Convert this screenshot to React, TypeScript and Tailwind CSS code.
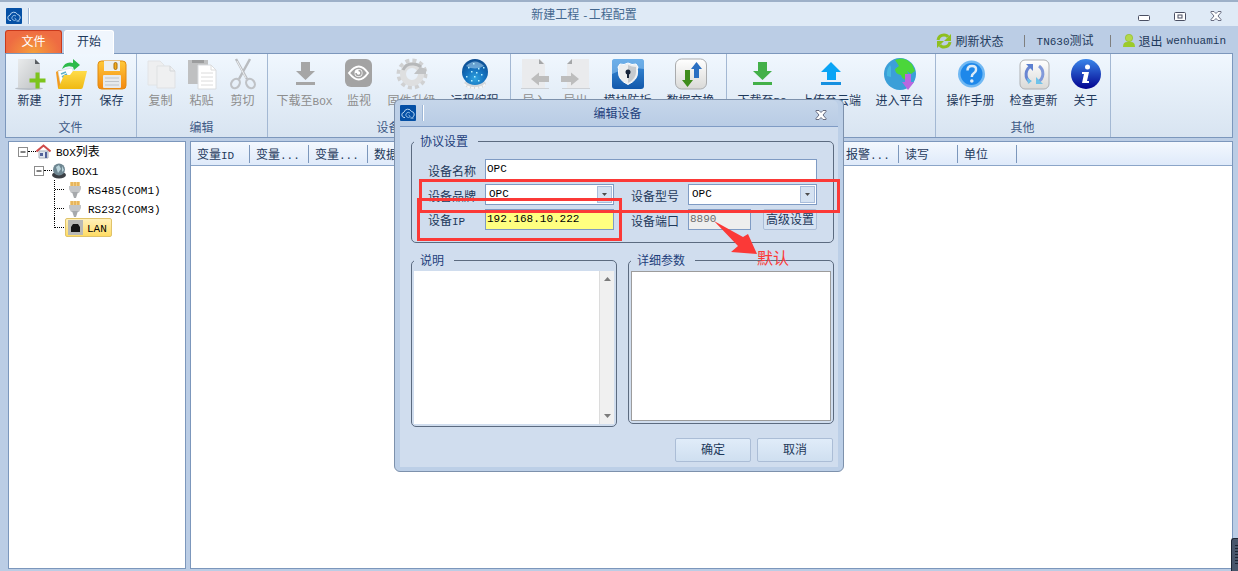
import type { ReactNode } from 'react';

interface ToolItem {
  label: string;
  icon: ReactNode;
  width: string;
  disabled?: boolean;
}

interface ToolGroup {
  title: string;
  items: ToolItem[];
}

/* Latin runs are set in a narrow mono face next to the CJK glyphs */
function T({ children }: { children: string }) {
  const parts = children.split(/([\x21-\x7e]+)/).filter(Boolean);
  return (
    <>
      {parts.map((p, i) =>
        /^[\x21-\x7e]/.test(p) ? (
          <span key={i} className="font-['Liberation_Mono',monospace] text-[11px]">
            {p}
          </span>
        ) : (
          p
        ),
      )}
    </>
  );
}

function Svg({ children }: { children: ReactNode }) {
  return (
    <svg width="32" height="32" viewBox="0 0 32 32" fill="none" aria-hidden="true">
      {children}
    </svg>
  );
}

const NewIcon = (
  <Svg>
    <ellipse cx="15" cy="30.500" rx="14" ry="1.500" fill="#b9bfc6" />
    <path d="M4 1h17l5 5v24H4z" fill="url(#page)" />
    <path d="M21 1l5 5h-5z" fill="#5a5e62" />
    <path d="M21.500 14.500h4v6h6v4h-6v6h-4v-6h-6v-4h6z" fill="#7cc41c" />
  </Svg>
);

const OpenIcon = (
  <Svg>
    <path d="M1 14l3-2 8 1v17H3z" fill="#f39a1e" />
    <path d="M3 13l14-3 5 14-16 5z" fill="#fff" stroke="#c9dbe4" strokeWidth=".6" />
    <path d="M6 16l5-2m-4 5l5-3" stroke="#5fb1c9" strokeWidth="1.500" />
    <path d="M9 17h6l3-4h14l-4 16q-.5 2-2 2H3z" fill="url(#folder)" />
    <path d="M7 11Q10 3 18 5V1l7 6-6 5-1-3Q12 7 7 11z" fill="#2dbb4a" />
  </Svg>
);

const SaveIcon = (
  <Svg>
    <rect x="2" y="3" width="28" height="28" rx="3.500" fill="url(#floppy)" stroke="#e08a10" />
    <path d="M8 3h16v10H8z" fill="#eceff2" />
    <rect x="18" y="4.500" width="3" height="7" rx="1.500" fill="#f3a91b" stroke="#a86f10" />
    <rect x="7" y="17" width="18" height="13" rx="1" fill="#e6e9ec" />
    <path d="M9 20h14M9 23.500h14M9 27h14" stroke="#bfc4ca" />
  </Svg>
);

const CopyIcon = (
  <Svg>
    <path d="M3 3h12l4 4v20H3z" fill="#eeeff0" stroke="#e2e4e6" />
    <path d="M12 8h13l5 5v17H12z" fill="#eff0f1" stroke="#dfe1e3" />
    <path d="M25 8v5h5" stroke="#d3d6d9" />
  </Svg>
);

const PasteIcon = (
  <Svg>
    <rect x="2" y="2" width="20" height="24" fill="#bfc0c1" />
    <path d="M6 2h12v3H6z" fill="#9c9d9e" />
    <path d="M12 7h13l5 5v19H12z" fill="#fff" stroke="#d9dcdf" />
    <path d="M25 7v5h5M15 15h12M15 19h12M15 23h12M15 27h12" stroke="#dcdcdc" />
  </Svg>
);

const CutIcon = (
  <Svg>
    <path d="M9 1l11 20M23 1L12 21" stroke="#b9bcc0" strokeWidth="2.500" />
    <path d="M10 3l9 17" stroke="#eceef0" />
    <ellipse cx="8.500" cy="25.500" rx="4" ry="5" transform="rotate(35 8.500 25.500)" stroke="#bfc2c6" strokeWidth="2.200" />
    <ellipse cx="23.500" cy="25.500" rx="4" ry="5" transform="rotate(-35 23.500 25.500)" stroke="#bfc2c6" strokeWidth="2.200" />
  </Svg>
);

function DownIcon({ color, bar }: { color: string; bar: string }) {
  return (
    <Svg>
      <path d="M12 4h9v9h5L16.500 22 7 13h5z" fill={color} />
      <path d="M7 24h19v3H7z" fill={bar} />
    </Svg>
  );
}

const UpIcon = (
  <Svg>
    <path d="M16 4l10 10h-5v8h-9v-8H6z" fill="#0aa4f5" />
    <path d="M6 24h20v3H6z" fill="#1690e0" />
  </Svg>
);

const EyeIcon = (
  <Svg>
    <rect x="2" y="1" width="27" height="28" rx="6" fill="#a3a3a3" />
    <path d="M6 15q10-13 19 0-9 13-19 0z" stroke="#fff" strokeWidth="2" />
    <circle cx="15.500" cy="15" r="4" fill="#fff" />
    <path d="M15.500 12.500a2.500 2.500 0 1 1-2.500 2.500" stroke="#a3a3a3" strokeWidth="1.500" />
  </Svg>
);

const GearIcon = (
  <Svg>
    <circle cx="16" cy="16" r="13.500" stroke="#d0d1d2" strokeWidth="4" strokeDasharray="4 3.070" />
    <circle cx="16" cy="16" r="9" fill="#e8f0f9" stroke="#dedfe0" strokeWidth="6" />
    <path d="M25 9a11 11 0 0 0-9-3 10 10 0 0 0-9 6" stroke="#b6b8ba" strokeWidth="3" />
    <path d="M18 16h12v-5l-6-2z" fill="#c0c2c4" />
  </Svg>
);

const GlobeIcon = (
  <Svg>
    <ellipse cx="16" cy="26" rx="11" ry="5" fill="#d3d7db" />
    <path d="M5 26q4 4 11 4t11-4" stroke="#f5f6f7" strokeWidth="2" strokeDasharray="3 1" />
    <circle cx="16" cy="14" r="13" fill="url(#globe)" />
    <path d="M7 8q9-9 18 0-9 5-18 0z" fill="#d4efff" opacity=".45" />
    <path d="M9 9h1.500v1.500H9zM14 5h1.500v1.500H14zM19 10h1.500v1.500H19zM7 18h1.500v1.500H7zM12 13h1.500v1.500H12zM15 18h1.500v1.500H15zM22 16h1.500v1.500H22zM12 22h1.500v1.500H12zM19 22h1.500v1.500H19zM24 9h1.500v1.500H24zM17 14h1.500v1.500H17z" fill="#b6f0ff" />
  </Svg>
);

const ImportIcon = (
  <Svg>
    <path d="M3 1h18l5 5v24H3z" fill="#eaebed" />
    <path d="M20 1l5 5h-5z" fill="#a5a7a9" />
    <path d="M2 30.500h28" stroke="#cdd1d6" />
    <path d="M12 21l8-6.500v3.500h10v6H20v3.500z" fill="#bdbdbd" />
  </Svg>
);

const ExportIcon = (
  <Svg>
    <path d="M12 1h17v29H7V6z" fill="#eaebed" />
    <path d="M12 1v5H7z" fill="#a5a7a9" />
    <path d="M2 30.500h28" stroke="#cdd1d6" />
    <path d="M19 21l-8-6.500v3.500H1v6h10v3.500z" fill="#bdbdbd" />
  </Svg>
);

const ShieldIcon = (
  <Svg>
    <rect x="0" y="1" width="32" height="30" rx="3" fill="url(#blue)" />
    <path d="M0 16q16-8 32-5V4a3 3 0 0 0-3-3H3a3 3 0 0 0-3 3z" fill="#8cc3f2" opacity=".6" />
    <path d="M16 5q4 2.500 8 1l2 3q-1 2-.5 5 .5 8-9.500 12.500Q6 22 6.500 14 7 11 6 9l2-3q4 1.500 8-1z" fill="#eceeef" stroke="#fff" />
    <path d="M16 7v18q8-4 8-11v-5q-4 0-8-2z" fill="#b6bbc1" opacity=".7" />
    <circle cx="16" cy="14" r="2.500" fill="#16243a" />
    <path d="M15 15h2v5h-2z" fill="#16243a" />
  </Svg>
);

const SwapIcon = (
  <Svg>
    <rect x=".5" y="1" width="31" height="30" rx="6" fill="url(#silver)" stroke="#a9abad" />
    <path d="M10 12h5v10h3l-5.500 7L7 22h3z" fill="#3f8c1c" />
    <path d="M21.500 4l5.500 7h-3v9h-5v-9h-3z" fill="#2a6fc2" />
  </Svg>
);

const PlatformIcon = (
  <Svg>
    <circle cx="16" cy="16" r="16" fill="#3b9fd8" />
    <path d="M11 2q6-3 12 0l5 4 3 7-4 3-4-3 2 6-3 3q-4-1-5-5-6-1-6-6l4-3z" fill="#4bd63a" />
    <path d="M6 7q-4 5-3 11l4 1V9z" fill="#47b7e0" />
    <path d="M21 16h6v8h3l-6 8-6-8h3z" fill="#b967e0" />
  </Svg>
);

const HelpIcon = (
  <Svg>
    <circle cx="16.500" cy="16" r="13.500" fill="#70b8f3" />
    <circle cx="16.500" cy="16" r="11" fill="#1e88ea" />
    <path d="M12.500 12.500q0-4.500 4.500-4.500t4 4q0 2-2.500 3.500-1.700 1-1.700 3.500" stroke="#dcebf8" strokeWidth="2.500" />
    <circle cx="16.800" cy="23" r="1.800" fill="#dcebf8" />
  </Svg>
);

const UpdateIcon = (
  <Svg>
    <rect x="2" y="2" width="29" height="29" rx="5" fill="url(#silver)" stroke="#aeb0b3" />
    <path d="M13 8a9.500 9.500 0 0 0-1 16" stroke="#6a86d2" strokeWidth="3" />
    <path d="M20 24a9.500 9.500 0 0 0 1-16" stroke="#8199da" strokeWidth="3" />
    <path d="M8 6h7v7z" fill="#5b7fd0" />
    <path d="M25 26h-7v-7z" fill="#6fc3ea" />
    <path d="M9 20l5 3-4 3z" fill="#6fc3ea" />
  </Svg>
);

const AboutIcon = (
  <Svg>
    <circle cx="16" cy="16" r="15" fill="url(#about)" />
    <circle cx="17.500" cy="9" r="2.500" fill="#fff" />
    <path d="M12 14h7l-2 9h2v2h-7l2-9h-2z" fill="#fff" />
  </Svg>
);

const groups: ToolGroup[] = [
  {
    title: '文件',
    items: [
      { label: '新建', icon: NewIcon, width: 'w-[41px]' },
      { label: '打开', icon: OpenIcon, width: 'w-[41px]' },
      { label: '保存', icon: SaveIcon, width: 'w-[41px]' },
    ],
  },
  {
    title: '编辑',
    items: [
      { label: '复制', icon: CopyIcon, width: 'w-[41px]', disabled: true },
      { label: '粘贴', icon: PasteIcon, width: 'w-[41px]', disabled: true },
      { label: '剪切', icon: CutIcon, width: 'w-[41px]', disabled: true },
    ],
  },
  {
    title: '设备',
    items: [
      { label: '下载至BOX', icon: <DownIcon color="#a6a6a6" bar="#a6a6a6" />, width: 'w-[67px]', disabled: true },
      { label: '监视', icon: EyeIcon, width: 'w-[42px]', disabled: true },
      { label: '固件升级', icon: GearIcon, width: 'w-[63px]', disabled: true },
      { label: '远程编程', icon: GlobeIcon, width: 'w-[63px]' },
    ],
  },
  {
    title: '',
    items: [
      { label: '导入', icon: ImportIcon, width: 'w-[41px]', disabled: true },
      { label: '导出', icon: ExportIcon, width: 'w-[41px]', disabled: true },
      { label: '模块防拆', icon: ShieldIcon, width: 'w-[63px]' },
      { label: '数据交换', icon: SwapIcon, width: 'w-[63px]' },
    ],
  },
  {
    title: '',
    items: [
      { label: '下载至PC', icon: <DownIcon color="#43b049" bar="#43b049" />, width: 'w-[64px]' },
      { label: '上传至云端', icon: UpIcon, width: 'w-[74px]' },
      { label: '进入平台', icon: PlatformIcon, width: 'w-[63px]' },
    ],
  },
  {
    title: '其他',
    items: [
      { label: '操作手册', icon: HelpIcon, width: 'w-[63px]' },
      { label: '检查更新', icon: UpdateIcon, width: 'w-[63px]' },
      { label: '关于', icon: AboutIcon, width: 'w-[41px]' },
    ],
  },
];

const columns = ['变量ID', '变量...', '变量...', '数据...', '', '', '', '', '', '', '', '报警...', '读写', '单位'];

function Gradients() {
  return (
    <svg width="0" height="0" className="absolute" aria-hidden="true">
      <defs>
        <linearGradient id="page" x1="0" y1="0" x2="1" y2="1">
          <stop offset="0" stopColor="#e9ebec" />
          <stop offset="1" stopColor="#bfc2c4" />
        </linearGradient>
        <linearGradient id="folder" x1="0" y1="0" x2="0" y2="1">
          <stop offset="0" stopColor="#ffdc4a" />
          <stop offset="1" stopColor="#efb913" />
        </linearGradient>
        <linearGradient id="floppy" x1="0" y1="0" x2="0" y2="1">
          <stop offset="0" stopColor="#ffc93a" />
          <stop offset="1" stopColor="#f4880f" />
        </linearGradient>
        <linearGradient id="blue" x1="0" y1="0" x2="0" y2="1">
          <stop offset="0" stopColor="#3f92dc" />
          <stop offset="1" stopColor="#1258ab" />
        </linearGradient>
        <linearGradient id="silver" x1="0" y1="0" x2="0" y2="1">
          <stop offset="0" stopColor="#ffffff" />
          <stop offset="1" stopColor="#d9d9d7" />
        </linearGradient>
        <linearGradient id="about" x1="0" y1="0" x2="0" y2="1">
          <stop offset="0" stopColor="#3a86ea" />
          <stop offset="1" stopColor="#02028f" />
        </linearGradient>
        <radialGradient id="globe" cx=".5" cy=".75" r=".75">
          <stop offset="0" stopColor="#2fa3e0" />
          <stop offset=".5" stopColor="#1470bd" />
          <stop offset="1" stopColor="#0b4a8e" />
        </radialGradient>
      </defs>
    </svg>
  );
}

function AppLogo() {
  return (
    <svg width="16" height="16" viewBox="0 0 16 16" fill="none" aria-hidden="true">
      <rect width="16" height="16" rx="1" fill="#0550a5" />
      <path d="M5 12.500H4a2.700 2.700 0 0 1 0-5.300 4 4 0 0 1 7.500-.7 3 3 0 0 1 1 5.700" stroke="#b9d7f2" />
      <path d="M10 8a2.500 2.500 0 1 0 .3 3.500L8.500 10" stroke="#8fbde8" />
      <path d="M10.500 13h3" stroke="#b9d7f2" />
    </svg>
  );
}

function CloseGlyph() {
  return (
    <svg width="12" height="10" viewBox="0 0 12 10" aria-hidden="true">
      <path
        d="M1 .5h3l2 2 2-2h3v1L8 5l3 3.500v1H8l-2-2-2 2H1v-1L4 5 1 1.500z"
        fill="#fff"
        stroke="#5b6075"
        strokeWidth=".9"
      />
    </svg>
  );
}

function TitleBar() {
  return (
    <header className="h-[26px] flex items-center pl-1.5 pr-4 pt-1 bg-[#dfeaf6] border-t-2 border-[#9db0c8]">
      <AppLogo />
      <div className="w-[2px] h-4 ml-1.5 bg-[#9db6d6] border-r border-white" />
      <h1 className="flex-1 text-center text-[#44688f] pb-0.5">
        <T>新建工程 -工程配置</T>
      </h1>
      <div className="flex items-center gap-6">
        <button aria-label="最小化" className="pt-1">
          <svg width="12" height="6" viewBox="0 0 12 6">
            <rect x=".5" y=".5" width="11" height="5" rx="1" fill="#fff" stroke="#4a4f63" />
          </svg>
        </button>
        <button aria-label="最大化">
          <svg width="12" height="9" viewBox="0 0 12 9">
            <rect x=".5" y=".5" width="11" height="8" rx="1" fill="#fff" stroke="#4a4f63" />
            <rect x="4" y="3" width="4" height="3" fill="#fff" stroke="#4a4f63" />
          </svg>
        </button>
        <button aria-label="关闭">
          <CloseGlyph />
        </button>
      </div>
    </header>
  );
}

function TabRow() {
  return (
    <nav className="h-[27px] flex items-end gap-[2px] pr-3">
      <button className="w-[57px] h-[23px] pb-0.5 rounded-t-[3px] border border-b-0 border-[#c9391c] text-white bg-[radial-gradient(ellipse_at_bottom,#f6a03c,#ee6b42_70%)]">
        文件
      </button>
      <button className="w-[50px] h-6 pb-1 -mb-px rounded-t-[3px] border border-b-0 border-white text-[#1e395b] bg-[#f0f6fd] z-10">
        开始
      </button>
      <div className="ml-auto h-6 flex items-center text-[#1e395b]">
        <button className="flex items-center gap-1">
          <svg width="16" height="16" viewBox="0 0 16 16" fill="none" aria-hidden="true">
            <path d="M2 7Q3 2 8 2q3 0 4 2" stroke="#8fbf1f" strokeWidth="3" />
            <path d="M14 9q-1 5-6 5-3 0-4-2" stroke="#8fbf1f" strokeWidth="3" />
            <path d="M15 1v7H8zM1 15V8h7z" fill="#8fbf1f" />
          </svg>
          刷新状态
        </button>
        <span className="w-px h-3 ml-5 mr-3 bg-[#7f7f7f]" />
        <button>
          <T>TN630测试</T>
        </button>
        <span className="w-px h-3 ml-4 mr-3 bg-[#7f7f7f]" />
        <button className="flex items-center gap-1">
          <svg width="12" height="14" viewBox="0 0 12 14" aria-hidden="true">
            <path d="M0 13q0-5 4-5h4q4 0 4 5z" fill="#9ccb2b" />
            <circle cx="6" cy="4" r="3.700" fill="#b4d84a" stroke="#8cb923" strokeWidth=".6" />
          </svg>
          退出
          <T>wenhuamin</T>
        </button>
      </div>
    </nav>
  );
}

function Ribbon() {
  return (
    <section className="h-[85px] flex overflow-hidden border border-[#7c97bc] bg-linear-to-b from-[#f0f7fe] to-[#d8e4f1]">
      {groups.map((group, i) => (
        <div key={i} className="shrink-0 flex flex-col pt-1 pl-[3px] pr-1 border-r border-[#a3b8d3]">
          <div className="flex">
            {group.items.map((item) => (
              <button
                key={item.label}
                disabled={item.disabled}
                className={`${item.width} shrink-0 flex flex-col items-center gap-[2px] whitespace-nowrap ${
                  item.disabled ? 'text-[#8d8d8d]' : 'text-[#1e395b]'
                }`}
              >
                {item.icon}
                <span className="h-4">
                  <T>{item.label}</T>
                </span>
              </button>
            ))}
          </div>
          <div className="mt-auto mb-[2px] h-4 text-center text-[#3e5a86]">{group.title}</div>
        </div>
      ))}
    </section>
  );
}

function Expander() {
  return (
    <svg width="10" height="10" viewBox="0 0 10 10" className="shrink-0" aria-hidden="true">
      <rect x=".5" y=".5" width="9" height="9" fill="#fff" stroke="#8c8c8c" />
      <path d="M2.500 5h5" stroke="#000" />
    </svg>
  );
}

function PlugIcon() {
  return (
    <svg width="14" height="16" viewBox="0 0 14 16" aria-hidden="true">
      <path d="M2 0h10v5H2z" fill="#f3cf86" />
      <path d="M4 0v4M7 0v4M10 0v4" stroke="#dc9b35" />
      <path d="M1 4h12v3l-2 4H3L1 7z" fill="#c3c5c7" />
      <path d="M4 10h6l-2 6H6z" fill="#a6a9ac" />
    </svg>
  );
}

function Branch({ last }: { last?: boolean }) {
  return (
    <span className={`w-[10px] shrink-0 border-l border-dotted border-black ${last ? 'h-[10px] self-start' : 'h-[19px]'}`}>
      <span className="block h-[10px] border-b border-dotted border-black" />
    </span>
  );
}

function DeviceTree() {
  return (
    <aside className="w-[178px] shrink-0 bg-white border border-[#7c97bc] text-black">
      <ul>
        <li>
          <div className="h-[19px] flex items-center pl-[9px]">
            <Expander />
            <span className="w-2 border-t border-dotted border-black" />
            <svg width="15" height="15" viewBox="0 0 15 15" aria-hidden="true">
              <path d="M3 7h9v7H3z" fill="#dfe6ef" stroke="#a8afba" />
              <path d="M.5 7.500l7-6 7 6" stroke="#cf4b4b" strokeWidth="2" fill="none" />
              <path d="M4 9h3v3H4zM9 8h2v6H9z" fill="#51629a" />
            </svg>
            <span className="ml-[5px]">
              <T>BOX列表</T>
            </span>
          </div>
          <ul>
            <li>
              <div className="h-[19px] flex items-center pl-[25px]">
                <Expander />
                <span className="w-2 border-t border-dotted border-black" />
                <svg width="14" height="16" viewBox="0 0 14 16" aria-hidden="true">
                  <ellipse cx="7" cy="12" rx="7" ry="3.500" fill="#3b3f44" />
                  <circle cx="7" cy="6.500" r="6" fill="#6f8792" />
                  <path d="M4 4l3-2 2 4-3 4zM10 3l2 4-2 2z" fill="#b9d3da" />
                </svg>
                <span className="ml-1.5">
                  <T>BOX1</T>
                </span>
              </div>
              <ul>
                {['RS485(COM1)', 'RS232(COM3)'].map((port) => (
                  <li key={port} className="h-[19px] flex items-center pl-[45px]">
                    <Branch />
                    <span className="ml-1">
                      <PlugIcon />
                    </span>
                    <span className="ml-1.5">
                      <T>{port}</T>
                    </span>
                  </li>
                ))}
                <li className="h-[19px] flex items-center pl-[45px]">
                  <Branch last />
                  <span className="h-[19px] ml-px flex items-center pl-0.5 pr-1 rounded-[2px] border border-[#e0c36a] bg-linear-to-b from-[#fff0b8] to-[#ffdc62]">
                    <svg width="15" height="15" viewBox="0 0 15 15" aria-hidden="true">
                      <rect width="15" height="15" fill="#b9b9b6" />
                      <path d="M3 12V7l2-3h5l2 3v5z" fill="#161616" />
                    </svg>
                    <span className="ml-1">
                      <T>LAN</T>
                    </span>
                  </span>
                </li>
              </ul>
            </li>
          </ul>
        </li>
      </ul>
    </aside>
  );
}

function VariableGrid() {
  return (
    <main className="flex-1 min-w-0 overflow-hidden bg-white border border-[#7c97bc]">
      <div className="bg-linear-to-b from-[#f3f8fe] to-[#dfeafa] border-b border-[#8ba5c8]">
        <table className="table-fixed w-[826px]">
          <thead>
            <tr className="h-[23px]">
              {columns.map((name, i) => (
                <th key={i} scope="col" className="w-[59px] p-0 font-normal text-left text-[#1e395b]">
                  <div className="h-[18px] pl-1.5 leading-[18px] whitespace-nowrap border-r border-[#7c97bc]">
                    <T>{name}</T>
                  </div>
                </th>
              ))}
            </tr>
          </thead>
        </table>
      </div>
    </main>
  );
}

function Combo({ id }: { id: string }) {
  return (
    <div className="relative w-[129px]">
      <select
        id={id}
        defaultValue="OPC"
        className="appearance-none block w-full h-[21px] pl-[3px] pb-0.5 bg-white border border-[#7f9bc4] text-black text-[11px] leading-4 font-['Liberation_Mono',monospace]"
      >
        <option>OPC</option>
      </select>
      <span className="absolute right-[2px] top-[2px] w-[15px] h-[17px] flex items-center justify-center pointer-events-none border border-[#a9bddb] bg-[#d5e2f2]">
        <svg width="5" height="3" viewBox="0 0 5 3">
          <path d="M0 0h5L2.500 3z" fill="#4d4d4d" />
        </svg>
      </span>
    </div>
  );
}

function Annotations() {
  return (
    <div className="absolute inset-0 pointer-events-none">
      <div className="absolute left-6 top-[79px] w-[421px] h-[34px] border-3 border-[#fb3937]" />
      <div className="absolute left-[22px] top-[98px] w-[205px] h-[43px] border-3 border-[#fb3937]" />
      <svg className="absolute left-[319px] top-[121px]" width="46" height="36" viewBox="0 0 46 36" aria-hidden="true">
        <path d="M0 0l29 16 5-3 9 20-26-2 7-6z" fill="#fb3937" />
      </svg>
      <span className="absolute left-[362px] top-[147px] text-base leading-5 text-[#fb3937]">默认</span>
    </div>
  );
}

function EditDialog() {
  return (
    <div
      role="dialog"
      aria-label="编辑设备"
      className="relative w-[450px] rounded-[6px] border border-[#7d91ac] bg-[#bccfe7] px-[5px] pb-1 text-[#1e395b]"
    >
      <div className="h-[27px] flex items-center pr-[11px] border-b border-[#7f9bc4] bg-linear-to-b from-[#c6d6ea] to-[#b9cce5] rounded-t-[6px]">
        <AppLogo />
        <div className="w-[2px] h-4 ml-1.5 bg-[#9db6d6] border-r border-white" />
        <h2 className="flex-1 text-center text-[#1e3f7c] pr-1">编辑设备</h2>
        <button aria-label="关闭" className="pt-1">
          <CloseGlyph />
        </button>
      </div>

      <form className="bg-[#d0ddee] px-[11px] pt-[6px] pb-[5px]" onSubmit={(e) => e.preventDefault()}>
        <fieldset className="min-w-0 -mr-[5px] w-[423px] border border-[#5c6b80] rounded-[5px] pb-[12px] px-4">
          <legend className="-ml-[14px] pl-1.5 pr-[10px] h-4 text-[#1e3f7c]">协议设置</legend>
          <div className="grid grid-cols-[57px_129px_17px_57px_129px] gap-y-1 items-center pt-[10px]">
            <label htmlFor="name" className="pt-[2px]">
              设备名称
            </label>
            <input
              id="name"
              defaultValue="OPC"
              className="col-span-4 h-[21px] pl-px pb-0.5 bg-white border border-[#7f9bc4] text-black text-[11px] font-['Liberation_Mono',monospace]"
            />

            <label htmlFor="brand" className="pt-[2px]">
              设备品牌
            </label>
            <Combo id="brand" />
            <span />
            <label htmlFor="model" className="pt-[2px]">
              设备型号
            </label>
            <Combo id="model" />

            <label htmlFor="ip" className="pt-[2px]">
              <T>设备IP</T>
            </label>
            <input
              id="ip"
              defaultValue="192.168.10.222"
              className="w-full h-[21px] pl-px pb-0.5 bg-[#ffff80] border border-[#7f9bc4] text-black text-[11px] font-['Liberation_Mono',monospace]"
            />
            <span />
            <label htmlFor="port" className="pt-[2px]">
              设备端口
            </label>
            <div className="flex justify-between">
              <input
                id="port"
                defaultValue="8890"
                disabled
                className="w-[63px] h-[21px] pl-px pb-0.5 bg-[#eeeeee] border border-[#7f9bc4] text-[#6d6d6d] text-[11px] font-['Liberation_Mono',monospace]"
              />
              <button type="button" className="w-[54px] h-[21px] pb-0.5 rounded-[2px] border border-[#abbdd6] bg-[#d6e3f3] whitespace-nowrap flex items-center justify-center">
                高级设置
              </button>
            </div>
          </div>
        </fieldset>

        <div className="flex items-start gap-[11px] pt-[9px] w-[423px]">
          <fieldset className="min-w-0 w-[206px] border border-[#5c6b80] rounded-[5px] px-[2px] pb-[2px]">
            <legend className="pl-1.5 pr-[10px] h-4 text-[#1e3f7c]">
              <label htmlFor="desc">说明</label>
            </legend>
            <div className="flex h-[153px] mt-[3px]">
              <textarea id="desc" className="flex-1 min-w-0 resize-none bg-white" />
              <div className="w-[15px] flex flex-col items-center justify-between py-1.5 border-l border-[#dcdcdc] bg-[#f0f0f0]">
                <svg width="7" height="4" viewBox="0 0 7 4">
                  <path d="M0 4h7L3.500 0z" fill="#7b7b7b" />
                </svg>
                <svg width="7" height="4" viewBox="0 0 7 4">
                  <path d="M0 0h7L3.500 4z" fill="#7b7b7b" />
                </svg>
              </div>
            </div>
          </fieldset>
          <fieldset className="min-w-0 w-[206px] border border-[#5c6b80] rounded-[5px] px-[2px] pb-[2px]">
            <legend className="pl-1.5 pr-[10px] h-4 text-[#1e3f7c]">
              <label htmlFor="params">详细参数</label>
            </legend>
            <textarea id="params" className="block w-full h-[150px] mt-[3px] resize-none bg-white border border-[#9c9c9c]" />
          </fieldset>
        </div>

        <div className="flex justify-end gap-1.5 pt-[11px] w-[422px]">
          <button className="w-[76px] h-6 pb-0.5 rounded-[2px] border border-[#abbdd6] bg-linear-to-b from-[#e0ecf9] to-[#cfdff0]">
            确定
          </button>
          <button type="button" className="w-[76px] h-6 pb-0.5 rounded-[2px] border border-[#abbdd6] bg-linear-to-b from-[#e0ecf9] to-[#cfdff0]">
            取消
          </button>
        </div>
      </form>
      <Annotations />
    </div>
  );
}

export default function App() {
  return (
    <div className="relative min-h-screen flex flex-col overflow-hidden bg-[#bbcde5] font-['Noto_Sans_CJK_SC',sans-serif] text-xs leading-4">
      <Gradients />
      <TitleBar />
      <div className="flex-1 flex flex-col pl-[5px]">
        <TabRow />
        <div className="pr-[5px]">
          <Ribbon />
        </div>
        <div className="flex-1 flex gap-1 pt-[3px] pl-[3px] pr-[5px] pb-[2px]">
          <DeviceTree />
          <VariableGrid />
        </div>
      </div>

      <div className="absolute inset-0 flex items-center justify-center">
        <EditDialog />
      </div>
      <div className="absolute right-0 bottom-0 w-[7px] h-[33px] rounded-tl-[3px] border-l border-t border-[#1c2533] bg-[#48566b] flex items-center justify-end">
        <span className="w-[3px] h-5 bg-[repeating-linear-gradient(#1c2533_0_1px,#48566b_1px_3px)]" />
      </div>
    </div>
  );
}
